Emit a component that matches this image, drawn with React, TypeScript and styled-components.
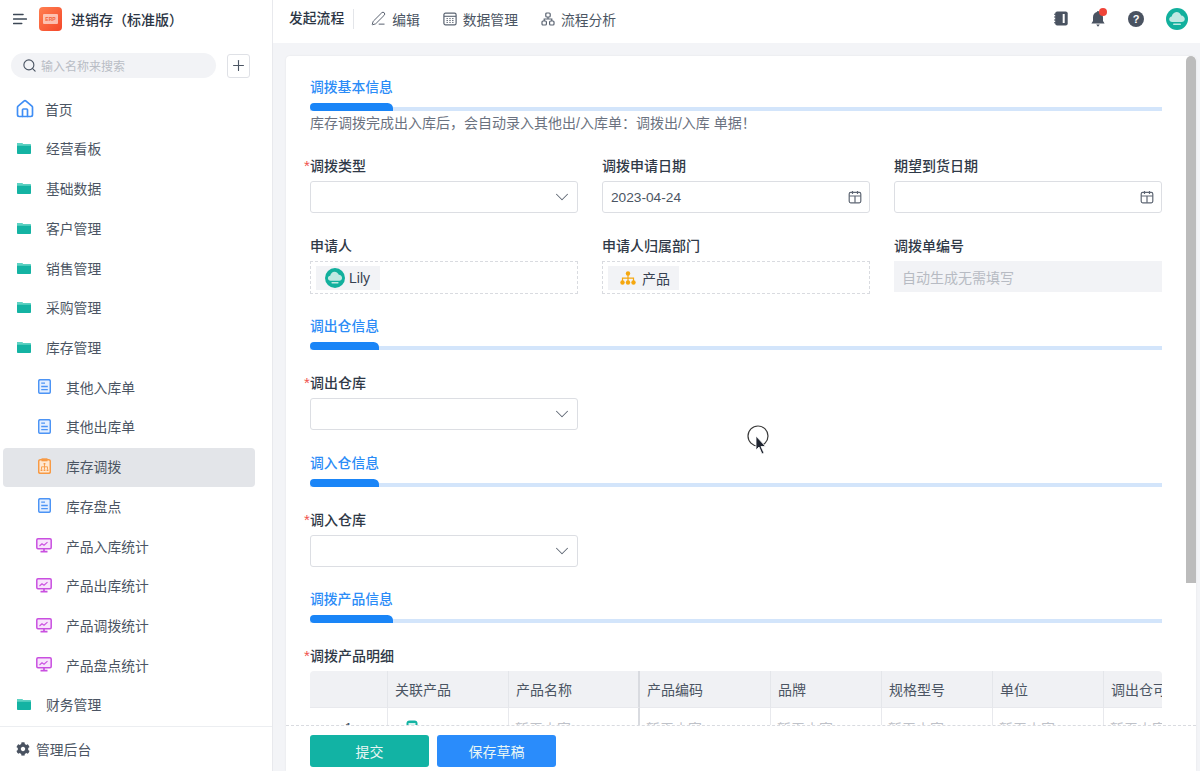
import React from 'react';
import styled, { createGlobalStyle } from 'styled-components';
import { Search, Plus, ChevronDown, House, PenLine } from 'lucide-react';
import { FaCog } from 'react-icons/fa';

const Global = createGlobalStyle`
  html, body { margin: 0; padding: 0; height: 100%; background: #fff; }
  * { box-sizing: border-box; }
  body { font-family: "Liberation Sans", "Noto Sans CJK SC", sans-serif; color: #374151; }
`;

const Page = styled.div`
  position: relative; width: 1200px; height: 771px; display: flex; overflow: hidden; background: #fff;
`;
const Sidebar = styled.aside`
  width: 273px; flex: none; display: flex; flex-direction: column; border-right: 1px solid #e8e9ed; background: #fff;
`;
const Brand = styled.div`
  height: 38px; padding: 0 0 0 13px; display: flex; align-items: center; gap: 12px;
`;
const BrandName = styled.div`
  font-size: 14px; font-weight: 500; color: #2b3544; white-space: nowrap; margin-left: -3px;
`;
const LogoBox = styled.div`
  width: 23px; height: 24px; border-radius: 4px; background: linear-gradient(135deg, #ff7f50, #f4472a);
  display: flex; align-items: center; justify-content: center;
`;
const LogoInner = styled.span`
  width: 15px; height: 10px; border-radius: 1px; background: rgba(255,255,255,.6); color: #f4603a;
  font-size: 5px; line-height: 10px; font-weight: 700; text-align: center; overflow: hidden; white-space: nowrap;
`;
const SearchRow = styled.div`
  margin-top: 15px; padding: 0 22px 0 11px; display: flex; align-items: center; gap: 11px; height: 25px;
`;
const SearchBox = styled.div`
  flex: 1; height: 25px; border-radius: 13px; background: #f2f3f6; display: flex; align-items: center;
  padding: 0 0 0 11px; gap: 4px; font-size: 12px; color: #4b5563;
`;
const SearchHint = styled.span`color: #b9bdc5;`;
const AddButton = styled.div`
  width: 23px; height: 24px; border: 1px solid #dfe1e6; border-radius: 3px; display: flex; align-items: center; justify-content: center; color: #4b5563;
`;
const Menu = styled.nav`
  flex: 1; overflow: hidden; padding-top: 12.1px; padding-left: 3px; padding-right: 17px;
`;
const MenuRow = styled.div<{ $sub?: boolean; $active?: boolean; $home?: boolean }>`
  height: 39.72px; display: flex; align-items: center; border-radius: 4px; padding-bottom: 2.5px;
  padding-left: ${p => (p.$sub ? '33px' : p.$home ? '12px' : '13px')};
  gap: ${p => (p.$home ? '10px' : '14px')};
  background: ${p => (p.$active ? '#e3e5e9' : 'transparent')};
  font-size: 13.8px; color: #4b5563; white-space: nowrap;
`;
const IconSlot = styled.span`
  width: 16px; flex: none; display: flex; justify-content: center;
`;
const SideFoot = styled.div`
  height: 45px; border-top: 1px solid #eceef1; padding-left: 16px; display: flex; align-items: center; gap: 6px;
  font-size: 13.8px; color: #4b5563;
`;
const Main = styled.main`
  flex: 1; min-width: 0; display: flex; flex-direction: column; background: #f3f4f7;
`;
const TopBar = styled.header`
  height: 43px; flex: none; background: #fff; display: flex; align-items: center; padding: 0 12px 6px 16px;
`;
const StartFlow = styled.div`
  font-size: 13.8px; font-weight: 500; color: #2b3544; padding-right: 9px; border-right: 1px solid #e3e5e9; line-height: 20px; margin-right: 17px;
`;
const TopItem = styled.div`
  display: flex; align-items: center; gap: 6px; font-size: 13.8px; color: #4b5563; margin-right: 23px; white-space: nowrap;
`;
const TopRight = styled.div`
  margin-left: auto; display: flex; align-items: center; gap: 22px;
`;
const BellWrap = styled.div`
  position: relative; width: 16px; height: 18px;
`;
const RedDot = styled.span`
  position: absolute; right: -1px; top: -2px; width: 8px; height: 8px; border-radius: 50%; background: #f04438;
`;
const Content = styled.div`
  flex: 1; min-height: 0; padding: 13px 4px 0 13px;
`;
const Card = styled.section`
  position: relative; height: 100%; background: #fff; border-radius: 4px 4px 0 0; display: flex; flex-direction: column; overflow: hidden;
  box-shadow: 0 0 2px rgba(0,0,0,.08);
`;
const Thumb = styled.div`
  position: absolute; right: 0; top: 0; width: 10px; height: 527px; border-radius: 5px 5px 0 0; background: #bcbcbc;
`;
const Scroll = styled.div`
  flex: 1; min-height: 0; overflow: hidden; padding: 22px 34px 0 24px;
`;
const Section = styled.div`
  & + & { margin-top: 23.6px; }
`;
const SectionTitle = styled.div`
  height: 20px; line-height: 20px; margin-bottom: 5px; color: #2b8cf7; font-size: 13.8px; font-weight: 500;
`;
const Bar = styled.div`
  position: relative; height: 8px;
  &::before { content: ''; position: absolute; left: 0; right: 0; bottom: 0; height: 4px; background: #d3e5fb; }
`;
const BarFill = styled.div<{ $w: number }>`
  position: absolute; left: 0; top: 0; bottom: 0; width: ${p => p.$w}px; background: #1a85f7; border-radius: 6px 8px 0 6px;
`;
const Note = styled.div`
  height: 18px; margin-top: 4px; padding-bottom: 2px; line-height: 16px; font-size: 14px; color: #6b7280; white-space: nowrap;
`;
const Fields = styled.div`
  margin-top: 23px; display: grid; grid-template-columns: repeat(3, 268px); column-gap: 24px; row-gap: 23px;
`;
const Field = styled.div``;
const WideField = styled.div`
  grid-column: 1 / -1;
`;
const Label = styled.div<{ $req?: boolean }>`
  position: relative; height: 20px; line-height: 20px; margin-bottom: 5px; font-size: 14px; font-weight: 500; color: #2f3947; white-space: nowrap;
  ${p => p.$req && `&::before { content: '*'; position: absolute; left: -6px; top: 0; color: #f0524b; font-size: 15px; }`}
`;
const Input = styled.div`
  height: 32px; border: 1px solid #dcdee3; border-radius: 3px; display: flex; align-items: center; justify-content: space-between;
  padding: 0 7px 0 8px; font-size: 13.7px; color: #4b5563; background: #fff;
`;
const Chevron = styled(ChevronDown)`
  margin-right: -3px;
`;
const Dashed = styled.div`
  height: 32.5px; border: 1px dashed #d9dbe0; padding: 4px 5px; display: flex;
`;
const Chip = styled.div<{ $org?: boolean }>`
  height: 24px; display: flex; align-items: center; gap: ${p => (p.$org ? '6px' : '4px')}; padding: 0 ${p => (p.$org ? '9px' : '10px')} 0 ${p => (p.$org ? '12px' : '9px')};
  background: #f2f3f6; font-size: 14px; color: #374151;
`;
const Disabled = styled.div`
  height: 31px; background: #f2f3f6; display: flex; align-items: center; padding: 0 8px; font-size: 14px; color: #b7bbc3;
`;
const TableWrap = styled.div`
  width: 852px; overflow: hidden; border-radius: 4px 4px 0 0;
`;
const TableGrid = styled.div`
  display: grid; width: 1000px; grid-template-columns: 78px 121px 131px 131px 111px 111px 111px 206px;
`;
const Th = styled.div<{ $frozen?: boolean }>`
  height: 37px; background: #f0f1f4; border-right: ${p => (p.$frozen ? '2px solid #d9dbe0' : '1px solid #e4e6ea')}; border-bottom: 1px solid #e8e9ed;
  display: flex; align-items: center; padding-left: 7px; font-size: 14px; color: #4b5563; white-space: nowrap;
`;
const Td = styled.div<{ $frozen?: boolean; $center?: boolean; $pad?: number }>`
  height: 40px; border-right: ${p => (p.$frozen ? '2px solid #d9dbe0' : '1px solid #e8e9ed')}; display: flex; align-items: center;
  justify-content: ${p => (p.$center ? 'center' : 'flex-start')}; padding-left: ${p => (p.$center ? 0 : p.$pad ?? 6)}px; font-size: 14px; color: #bfc2c9; white-space: nowrap;
`;
const RowNo = styled(Td)`
  color: #4b5563;
`;
const Foot = styled.footer`
  height: 46px; flex: none; border-top: 1px dashed #d9dbe0; background: #fff; padding: 9px 0 0 24px; display: flex; gap: 8px;
`;
const Btn = styled.button<{ $bg: string }>`
  width: 119px; height: 32px; border: 0; border-radius: 3px; background: ${p => p.$bg}; color: #e8f6f4; font: inherit; font-size: 14px;
`;
const Cursor = styled.svg`
  position: absolute; left: 745px; top: 424px; pointer-events: none;
`;

const Folder = () => (
  <svg width="16" height="14" viewBox="0 0 16 14"><path d="M1 3.200c0-.7.5-1.200 1.200-1.200h3.600l1.500 1.300h6.500c.7 0 1.200.5 1.200 1.200V12c0 .6-.5 1-1.100 1H2.100C1.500 13 1 12.600 1 12z" fill="#14b3a3" /><path d="M1 3.200c0-.7.5-1.200 1.200-1.200h3.600l1.500 1.300h6.500c.7 0 1.200.5 1.200 1.200v.3H1z" fill="#5fd3c4" /></svg>
);
const Doc = () => (
  <svg width="13" height="15" viewBox="0 0 13 15"><rect x=".7" y=".7" width="11.600" height="13.600" rx="1.600" fill="#e4efff" stroke="#4c94f5" strokeWidth="1.500" /><path d="M3.200 4.200h3.800M3.200 7.500h6.600M3.200 10.700h6.600" stroke="#4c94f5" strokeWidth="1.300" /></svg>
);
const Clip = () => (
  <svg width="13" height="16" viewBox="0 0 13 16"><rect x=".7" y="1.800" width="11.600" height="13.500" rx="1.500" fill="#ffe8d2" stroke="#f79a45" strokeWidth="1.500" /><rect x="3.500" y=".3" width="6" height="3" fill="#f79a45" /><path d="M6.500 5.500v6M3.500 11.500V8.800h6v2.700" stroke="#f79a45" strokeWidth=".9" fill="none" /><path d="M2.600 12.300h1.800M5.600 12.300h1.800M8.600 12.300h1.800M5.600 5.800h1.800" stroke="#f79a45" strokeWidth="1.500" /></svg>
);
const Monitor = () => (
  <svg width="16" height="15" viewBox="0 0 16 15"><rect x=".8" y=".8" width="14.400" height="10" rx="1.200" fill="#f8e4fc" stroke="#c94fe0" strokeWidth="1.500" /><path d="M3.500 8l2.500-2.200 2 1.400 3.500-3" stroke="#c94fe0" strokeWidth="1.100" fill="none" /><path d="M4.500 13.600h7M8 11v2.500" stroke="#c94fe0" strokeWidth="1.700" /></svg>
);
const Burger = () => (
  <svg width="14" height="12" viewBox="0 0 14 12"><path d="M.7 1.500h9.300M.7 6h12.600M.7 10.500h8" stroke="#3d4856" strokeWidth="1.600" strokeLinecap="round" /></svg>
);
const GridIcon = () => (
  <svg width="14" height="14" viewBox="0 0 14 14" fill="none" stroke="#5b6472"><rect x=".9" y="1.200" width="12.200" height="11.600" rx="1.600" strokeWidth="1.200" /><path d="M1 4.300h12" strokeWidth="1.100" /><path d="M3.500 6.600h7M3.500 8.500h7M3.500 10.400h7" strokeWidth="1" strokeDasharray="1.400 1.400" /></svg>
);
const FlowIcon = () => (
  <svg width="14" height="14" viewBox="0 0 14 14" fill="none" stroke="#5b6472" strokeWidth="1.200"><rect x="4.800" y="1" width="4.400" height="4" rx="1" /><rect x="1" y="9" width="4.400" height="4" rx="1" /><rect x="8.600" y="9" width="4.400" height="4" rx="1" /><path d="M7 5v2H3.200v2M7 7h3.800v2" /></svg>
);
const Notebook = () => (
  <svg width="14" height="15" viewBox="0 0 14 15"><rect x="1.200" y=".5" width="12.500" height="14" rx="2" fill="#4a5361" /><rect x="8.700" y="3" width="2" height="9" fill="#fff" /><path d="M0 3.200h2.400M0 6h2.400M0 9h2.400M0 11.800h2.400" stroke="#4a5361" strokeWidth="1.100" /></svg>
);
const BellSvg = styled.svg`
  display: block; margin-left: 1px;
`;
const Bell = () => (
  <BellSvg width="14" height="18" viewBox="0 0 14 18"><path d="M7 1c.7 0 1.100.4 1.200 1.100C10.700 2.700 12 5 12 7.500v3.600l1.600 2.400H.4L2 11.100V7.500C2 5 3.300 2.700 5.800 2.100 5.900 1.400 6.300 1 7 1z" fill="#4a5361" /><path d="M5.200 14.600h3.600L7 16.800z" fill="#4a5361" /></BellSvg>
);
const Help = () => (
  <svg width="16" height="16" viewBox="0 0 16 16"><circle cx="8" cy="8" r="8" fill="#4a5361" /><text x="8" y="12" textAnchor="middle" fontSize="11" fontWeight="700" fill="#fff" fontFamily="Liberation Sans, sans-serif">?</text></svg>
);
const AvatarSvg = styled.svg`
  flex: none;
`;
const Avatar = ({ size }: { size: number }) => (
  <AvatarSvg width={size} height={size} viewBox="0 0 22 22"><circle cx="11" cy="11" r="11" fill="#12b09d" /><path d="M6.200 14c-1.700 0-3-1.200-3-2.800 0-1.500 1.100-2.600 2.500-2.800C6.200 6.300 8 4 10.500 4c2.300 0 4 1.700 4.700 3.500 2 .1 3.600 1.900 3.600 3.500 0 1.700-1.400 3-3.200 3z" fill="#bfe9e2" /><rect x="7" y="15.500" width="8" height="1.600" rx=".8" fill="#bfe9e2" /></AvatarSvg>
);
const Calendar = () => (
  <svg width="14" height="14" viewBox="0 0 14 14" fill="none" stroke="#5f6774" strokeWidth="1.200"><rect x="1.200" y="2.400" width="11.600" height="10.400" rx="1.500" /><path d="M1.200 6h11.600M4.500 1v3M9.500 1v3M7 6v6.800" /></svg>
);
const Org = () => (
  <svg width="16" height="14" viewBox="0 0 16 14"><circle cx="8" cy="2.500" r="2.200" fill="#f5a70f" /><circle cx="2.500" cy="11.500" r="2.200" fill="#f5a70f" /><circle cx="8" cy="11.500" r="2.200" fill="#f5a70f" /><circle cx="13.500" cy="11.500" r="2.200" fill="#f5a70f" /><path d="M8 3v8M2.500 11V7.200h11V11" stroke="#f5a70f" strokeWidth="1.200" fill="none" /></svg>
);
const ProductSvg = styled.svg`
  margin-top: 4px;
`;
const ProductIcon = () => (
  <ProductSvg width="12" height="20" viewBox="0 0 12 20"><rect x=".5" y=".5" width="11" height="16" rx="3" fill="#14b3a3" /><rect x="2.500" y="3" width="7" height="3" fill="#d6f3ee" /></ProductSvg>
);

const Sel = () => (
  <Input><span /><Chevron size={22} color="#5f6774" strokeWidth={1.1} /></Input>
);

type Kind = 'folder' | 'doc' | 'clip' | 'monitor';
const menu: { t: string; k: Kind; sub?: boolean; active?: boolean }[] = [
  { t: '经营看板', k: 'folder' },
  { t: '基础数据', k: 'folder' },
  { t: '客户管理', k: 'folder' },
  { t: '销售管理', k: 'folder' },
  { t: '采购管理', k: 'folder' },
  { t: '库存管理', k: 'folder' },
  { t: '其他入库单', k: 'doc', sub: true },
  { t: '其他出库单', k: 'doc', sub: true },
  { t: '库存调拨', k: 'clip', sub: true, active: true },
  { t: '库存盘点', k: 'doc', sub: true },
  { t: '产品入库统计', k: 'monitor', sub: true },
  { t: '产品出库统计', k: 'monitor', sub: true },
  { t: '产品调拨统计', k: 'monitor', sub: true },
  { t: '产品盘点统计', k: 'monitor', sub: true },
  { t: '财务管理', k: 'folder' },
];
const icons: Record<Kind, React.ReactNode> = { folder: <Folder />, doc: <Doc />, clip: <Clip />, monitor: <Monitor /> };
const heads = ['', '关联产品', '产品名称', '产品编码', '品牌', '规格型号', '单位', '调出仓可用库存'];

export default function App() {
  return (
    <Page>
      <Global />
      <Sidebar>
        <Brand>
          <Burger />
          <LogoBox><LogoInner>ERP</LogoInner></LogoBox>
          <BrandName>进销存（标准版）</BrandName>
        </Brand>
        <SearchRow>
          <SearchBox><Search size={15} strokeWidth={1.8} /><SearchHint>输入名称来搜索</SearchHint></SearchBox>
          <AddButton><Plus size={17} strokeWidth={1.6} /></AddButton>
        </SearchRow>
        <Menu>
          <MenuRow $home><House size={20} color="#3f8ef5" strokeWidth={2} />首页</MenuRow>
          {menu.map(m => (
            <MenuRow key={m.t} $sub={m.sub} $active={m.active}><IconSlot>{icons[m.k]}</IconSlot>{m.t}</MenuRow>
          ))}
        </Menu>
        <SideFoot><FaCog size={14} color="#4a5361" />管理后台</SideFoot>
      </Sidebar>
      <Main>
        <TopBar>
          <StartFlow>发起流程</StartFlow>
          <TopItem><PenLine size={15} color="#4f5866" strokeWidth={1.5} />编辑</TopItem>
          <TopItem><GridIcon />数据管理</TopItem>
          <TopItem><FlowIcon />流程分析</TopItem>
          <TopRight>
            <Notebook />
            <BellWrap><Bell /><RedDot /></BellWrap>
            <Help />
            <Avatar size={22} />
          </TopRight>
        </TopBar>
        <Content>
          <Card>
            <Scroll>
              <Section>
                <SectionTitle>调拨基本信息</SectionTitle>
                <Bar><BarFill $w={83} /></Bar>
                <Note>库存调拨完成出入库后，会自动录入其他出/入库单：调拨出/入库 单据！</Note>
                <Fields>
                  <Field><Label $req>调拨类型</Label><Sel /></Field>
                  <Field><Label>调拨申请日期</Label><Input>2023-04-24<Calendar /></Input></Field>
                  <Field><Label>期望到货日期</Label><Input><span /><Calendar /></Input></Field>
                  <Field><Label>申请人</Label><Dashed><Chip><Avatar size={20} />Lily</Chip></Dashed></Field>
                  <Field><Label>申请人归属部门</Label><Dashed><Chip $org><Org />产品</Chip></Dashed></Field>
                  <Field><Label>调拨单编号</Label><Disabled>自动生成无需填写</Disabled></Field>
                </Fields>
              </Section>
              <Section>
                <SectionTitle>调出仓信息</SectionTitle>
                <Bar><BarFill $w={69} /></Bar>
                <Fields><Field><Label $req>调出仓库</Label><Sel /></Field></Fields>
              </Section>
              <Section>
                <SectionTitle>调入仓信息</SectionTitle>
                <Bar><BarFill $w={69} /></Bar>
                <Fields><Field><Label $req>调入仓库</Label><Sel /></Field></Fields>
              </Section>
              <Section>
                <SectionTitle>调拨产品信息</SectionTitle>
                <Bar><BarFill $w={83} /></Bar>
                <Fields><WideField>
                  <Label $req>调拨产品明细</Label>
                  <TableWrap>
                    <TableGrid>
                      {heads.map((h, i) => <Th key={i} $frozen={i === 2}>{h}</Th>)}
                      <RowNo $center>1</RowNo>
                      <Td $pad={18}><ProductIcon /></Td>
                      {heads.slice(2).map((h, i) => <Td key={h} $frozen={i === 0}>暂无内容</Td>)}
                    </TableGrid>
                  </TableWrap>
                </WideField></Fields>
              </Section>
            </Scroll>
            <Foot>
              <Btn $bg="#12b3a4">提交</Btn>
              <Btn $bg="#2a8cfb">保存草稿</Btn>
            </Foot>
            <Thumb />
          </Card>
        </Content>
      </Main>
      <Cursor width="26" height="32" viewBox="0 0 26 32">
        <circle cx="13" cy="12" r="10" fill="#fff" stroke="#3a3a3a" strokeWidth="1.200" />
        <path d="M11 12v14l3-3 3 7 2-1-3-6.500h4.500z" fill="#1f2430" stroke="#fff" strokeWidth=".8" />
      </Cursor>
    </Page>
  );
}
